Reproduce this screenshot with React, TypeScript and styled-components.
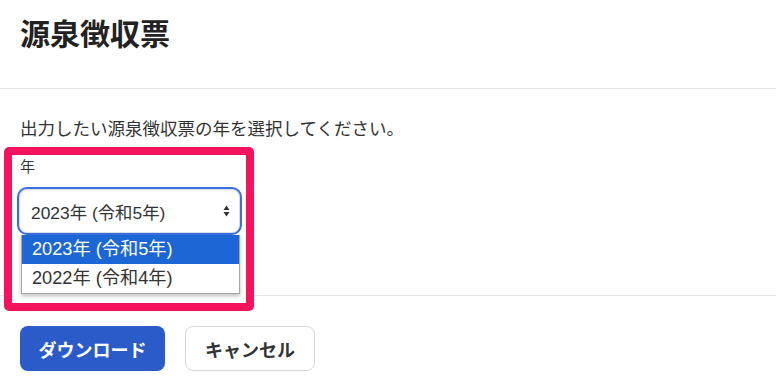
import React from 'react';
import styled, { createGlobalStyle } from 'styled-components';

const FONT = `"Liberation Sans", "Noto Sans CJK JP", sans-serif`;

const GlobalStyle = createGlobalStyle`
  html, body {
    margin: 0;
    padding: 0;
    background: #ffffff;
  }
  body {
    font-family: ${FONT};
    color: #333333;
  }
`;

const years = [
  { value: '2023', label: '2023年 (令和5年)' },
  { value: '2022', label: '2022年 (令和4年)' },
];

function App() {
  return (
    <>
      <GlobalStyle />
      <Page>
        <Header>
          <Title>源泉徴収票</Title>
        </Header>
        <Body>
          <Description>出力したい源泉徴収票の年を選択してください。</Description>
          <Highlight>
            <FieldLabel>年</FieldLabel>
            <SelectWrap>
              <SelectBox>
                <SelectText>{years[0].label}</SelectText>
                <Arrows>
                  <svg width="7" height="12" viewBox="0 0 7 12">
                    <path d="M3.5 0.5 L6.5 5 H0.5 Z" fill="#333" />
                    <path d="M3.5 11.5 L6.5 7 H0.5 Z" fill="#333" />
                  </svg>
                </Arrows>
              </SelectBox>
              <OptionList>
                {years.map((y, i) => (
                  <OptionItem key={y.value} $selected={i === 0}>
                    {y.label}
                  </OptionItem>
                ))}
              </OptionList>
            </SelectWrap>
          </Highlight>
        </Body>
        <Footer>
          <PrimaryButton>ダウンロード</PrimaryButton>
          <SecondaryButton>キャンセル</SecondaryButton>
        </Footer>
      </Page>
    </>
  );
}

const Page = styled.div`
  width: 776px;
  height: 387px;
  overflow: hidden;
`;

const Header = styled.header`
  height: 89px;
  box-sizing: border-box;
  padding: 15px 20px 0;
  border-bottom: 1px solid #e6e6e6;
`;

const Title = styled.h1`
  margin: 0;
  font-size: 30px;
  line-height: 40px;
  font-weight: 700;
  color: #222222;
`;

const Body = styled.section`
  padding: 28px 20px 0;
`;

const Description = styled.p`
  margin: 0;
  font-size: 17.5px;
  line-height: 25px;
  color: #333333;
`;

const Highlight = styled.div`
  position: relative;
  z-index: 1;
  width: 250px;
  height: 164px;
  box-sizing: border-box;
  margin: 5px 0 -16px -16px;
  padding: 2px 0 0 5px;
  border: 8px solid #f5135e;
  border-radius: 5px;
  background: #ffffff;
`;

const FieldLabel = styled.div`
  padding-left: 3px;
  font-size: 15px;
  line-height: 20px;
  color: #333333;
`;

const SelectWrap = styled.div`
  position: relative;
  margin-top: 10px;
  width: 225px;
`;

const SelectBox = styled.div`
  display: flex;
  align-items: center;
  justify-content: space-between;
  height: 48px;
  box-sizing: border-box;
  padding: 0 10px 0 12px;
  border: 2px solid #3a6fe0;
  border-radius: 10px;
  box-shadow: inset 0 0 0 1px #d9e0ea, inset 0 2px 3px rgba(0, 0, 0, 0.06);
  background: #ffffff;
`;

const SelectText = styled.span`
  font-size: 17.4px;
  color: #333333;
`;

const Arrows = styled.span`
  display: flex;
  align-items: center;
`;

const OptionList = styled.ul`
  position: absolute;
  top: 48px;
  left: 4px;
  width: 219px;
  margin: 0;
  padding: 0;
  list-style: none;
  box-sizing: border-box;
  border: 1px solid #a7a7a7;
  border-top: none;
  background: #ffffff;
  box-shadow: 0 2px 4px rgba(0, 0, 0, 0.25);
`;

const OptionItem = styled.li<{ $selected?: boolean }>`
  height: 29px;
  padding-left: 10px;
  font-size: 18.2px;
  line-height: 29px;
  color: ${({ $selected }) => ($selected ? '#ffffff' : '#333333')};
  background: ${({ $selected }) => ($selected ? '#1c66d6' : 'transparent')};
`;

const Footer = styled.footer`
  display: flex;
  gap: 20px;
  padding: 30px 20px 0;
  border-top: 1px solid #e6e6e6;
`;

const ButtonBase = styled.button`
  height: 45px;
  box-sizing: border-box;
  border-radius: 8px;
  font-family: ${FONT};
  font-size: 18px;
  font-weight: 700;
  cursor: pointer;
`;

const PrimaryButton = styled(ButtonBase)`
  width: 145px;
  border: none;
  background: #2b5bc8;
  color: #ffffff;
`;

const SecondaryButton = styled(ButtonBase)`
  width: 130px;
  border: 1px solid #d8d8d8;
  background: #ffffff;
  color: #333333;
`;

export default App;
